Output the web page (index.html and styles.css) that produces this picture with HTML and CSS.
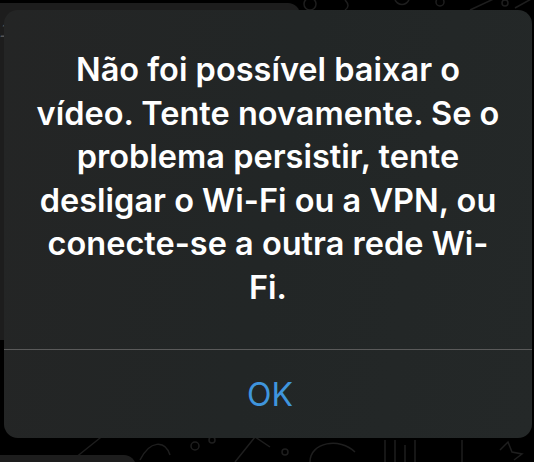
FILE: index.html
```html
<!DOCTYPE html>
<html lang="pt">
<head>
<meta charset="utf-8">
<link rel="stylesheet" href="styles.css">
</head>
<body>
<div class="screen">
  <svg class="doodles" width="534" height="462" viewBox="0 0 534 462" fill="none" stroke="#1e1e1e" stroke-width="1.5">
    <circle cx="310" cy="4" r="6"/>
    <path d="M345 0 q6 6 0 10"/>
    <path d="M395 0 c4 6 10 6 14 0"/>
    <circle cx="440" cy="2" r="4"/>
    <path d="M470 10 l30 -14"/>
    <circle cx="505" cy="3" r="3"/>
    <path d="M515 8 l18 -10"/>
    <path d="M75 458 l35 -28"/>
    <path d="M140 460 c10 -20 25 -20 30 -5"/>
    <circle cx="195" cy="446" r="4"/>
    <circle cx="212" cy="440" r="3"/>
    <path d="M235 462 l20 -25 l15 10"/>
    <circle cx="285" cy="452" r="3"/>
    <path d="M310 462 c0 -20 30 -25 45 -10"/>
    <path d="M385 440 v22 M395 440 v22 M405 445 v17 M415 440 v22"/>
    <path d="M462 440 v22"/>
    <path d="M500 450 l8 -8 l4 10 l10 2 l-8 6"/>
  </svg>
  <div class="bubble bubble-top"><span class="stamp">1</span></div>
  <div class="bubble bubble-bottom"></div>
  <div class="alert" role="alertdialog">
    <p class="message">Não foi possível baixar o vídeo. Tente novamente. Se o problema persistir, tente desligar o Wi-Fi ou a VPN, ou conecte-se a outra rede Wi-Fi.</p>
    <button class="action">OK</button>
  </div>
</div>
</body>
</html>
```
FILE: styles.css
```css
* { box-sizing: border-box; }
html, body {
  margin: 0;
  padding: 0;
  background: #000;
}
.screen {
  position: relative;
  width: 534px;
  height: 462px;
  overflow: hidden;
  background: #000;
  font-family: Inter, "Noto Sans", sans-serif;
}
.doodles {
  position: absolute;
  left: 0;
  top: 0;
}
.bubble {
  position: absolute;
  background: #1d1d1d;
}
.bubble-top {
  left: 0;
  top: 3px;
  width: 300px;
  height: 337px;
  border-radius: 0 12px 6px 0;
}
.stamp {
  position: absolute;
  left: 0;
  top: 16px;
  color: #555;
  font-style: italic;
  font-size: 20px;
  font-family: "Liberation Sans", sans-serif;
}
.bubble-bottom {
  left: 0;
  top: 455px;
  width: 136px;
  height: 20px;
  border-radius: 0 12px 0 0;
}
.alert {
  position: absolute;
  left: 4px;
  top: 10px;
  width: 528px;
  height: 428px;
  border-radius: 14px;
  background: linear-gradient(100deg, #242525 0%, #222626 50%, #242828 100%);
  display: flex;
  flex-direction: column;
  overflow: hidden;
}
.message {
  margin: 0;
  height: 340px;
  padding: 38px 27px 0;
  color: #fff;
  font-size: 32.5px;
  font-weight: 600;
  line-height: 43.5px;
  text-align: center;
  letter-spacing: 0;
  border-bottom: 1px solid #5a5a5a;
}
.action {
  flex: 1;
  border: 0;
  background: transparent;
  color: #3f95dd;
  font-family: inherit;
  font-size: 32px;
  font-weight: 400;
  padding: 0 0 0 4px;
}
```
